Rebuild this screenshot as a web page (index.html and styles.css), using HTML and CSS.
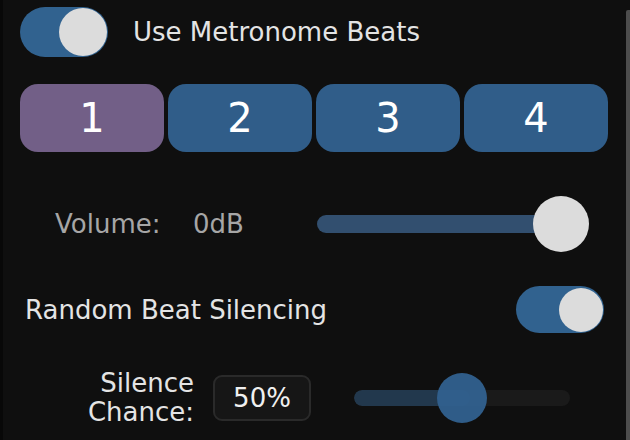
FILE: index.html
```html
<!DOCTYPE html>
<html>
<head>
<meta charset="utf-8">
<link rel="stylesheet" href="styles.css">
</head>
<body>
<div class="edge"></div>
<div class="panel">
  <div class="row-toggle">
    <div class="toggle big"><div class="knob"></div></div>
    <span class="label">Use Metronome Beats</span>
  </div>
  <div class="beats">
    <div class="beat active">1</div>
    <div class="beat">2</div>
    <div class="beat">3</div>
    <div class="beat">4</div>
  </div>
  <div class="row-volume">
    <span class="dim vol-label">Volume:</span>
    <span class="dim vol-value">0dB</span>
    <div class="slider vol-slider">
      <div class="track vol-track"></div>
      <div class="thumb vol-thumb"></div>
    </div>
  </div>
  <div class="row-random">
    <span class="label">Random Beat Silencing</span>
    <div class="toggle small"><div class="knob"></div></div>
  </div>
  <div class="row-silence">
    <div class="silence-label">Silence<br>Chance:</div>
    <div class="valuebox">50%</div>
    <div class="slider sil-slider">
      <div class="track sil-track"><div class="sil-fill"></div></div>
      <div class="thumb sil-thumb"></div>
    </div>
  </div>
</div>
<div class="scrollbar"></div>
</body>
</html>
```
FILE: styles.css
```css
html, body {
  margin: 0;
  padding: 0;
  width: 630px;
  height: 440px;
  overflow: hidden;
  background: #0f0f0f;
  font-family: "DejaVu Sans", sans-serif;
  font-size: 26px;
  color: #e4e4e4;
}
body {
  position: relative;
}
.edge {
  position: absolute;
  left: 0;
  top: 0;
  width: 3px;
  height: 440px;
  background: #080808;
}
.scrollbar {
  position: absolute;
  right: 0;
  top: 10px;
  width: 4px;
  height: 440px;
  background: #4d4d4d;
  border-radius: 2px 0 0 0;
}
.panel {
  padding: 7px 22px 0 20px;
  display: flex;
  flex-direction: column;
}
.row-toggle {
  display: flex;
  align-items: center;
  height: 50px;
  gap: 25px;
}
.toggle {
  background: #31628f;
  border-radius: 30px;
  display: flex;
  align-items: center;
  justify-content: flex-end;
  box-sizing: border-box;
}
.toggle .knob {
  background: #dcdcdc;
  border-radius: 50%;
}
.toggle.big {
  width: 88px;
  height: 50px;
  padding-right: 1px;
}
.toggle.big .knob {
  width: 48px;
  height: 48px;
}
.toggle.small {
  width: 88px;
  height: 47px;
  padding-right: 1px;
}
.toggle.small .knob {
  width: 44px;
  height: 44px;
}
.label {
  line-height: 30px;
}
.beats {
  margin-top: 27px;
  display: flex;
  gap: 4px;
  height: 68px;
}
.beat {
  width: 144px;
  height: 68px;
  border-radius: 18px;
  background: #305d89;
  color: #ffffff;
  font-size: 40px;
  display: flex;
  align-items: center;
  justify-content: center;
}
.beat.active {
  background: #725f87;
}
.row-volume {
  margin-top: 44px;
  height: 56px;
  display: flex;
  align-items: center;
  padding-left: 35px;
}
.dim {
  color: #a6a6a6;
}
.vol-label {
  width: 138px;
}
.vol-value {
  width: 124px;
}
.slider {
  position: relative;
  display: flex;
  align-items: center;
}
.vol-slider {
  width: 272px;
  height: 56px;
}
.track {
  border-radius: 10px;
}
.vol-track {
  width: 250px;
  height: 18px;
  background: #324f6f;
}
.thumb {
  position: absolute;
  border-radius: 50%;
}
.vol-thumb {
  right: 0;
  top: 0;
  width: 56px;
  height: 56px;
  background: #dcdcdc;
}
.row-random {
  margin-top: 34px;
  height: 47px;
  display: flex;
  align-items: center;
  justify-content: space-between;
  padding-left: 5px;
  padding-right: 4px;
}
.row-silence {
  margin-top: 38px;
  height: 54px;
  display: flex;
  align-items: center;
}
.silence-label {
  width: 174px;
  text-align: right;
  line-height: 29px;
  color: #e4e4e4;
}
.valuebox {
  margin-left: 19px;
  width: 98px;
  height: 46px;
  box-sizing: border-box;
  border: 2px solid #2a2a2a;
  border-radius: 9px;
  background: #161616;
  color: #f0f0f0;
  display: flex;
  align-items: center;
  justify-content: center;
}
.sil-slider {
  margin-left: 43px;
  width: 216px;
  height: 54px;
}
.sil-track {
  width: 216px;
  height: 16px;
  background: #1a1a1a;
  border-radius: 8px;
  overflow: hidden;
}
.sil-fill {
  width: 116px;
  height: 16px;
  background: #22384d;
  border-radius: 8px;
}
.sil-thumb {
  left: 83px;
  top: 2px;
  width: 50px;
  height: 50px;
  background: #31608e;
  opacity: 0.96;
}
```
